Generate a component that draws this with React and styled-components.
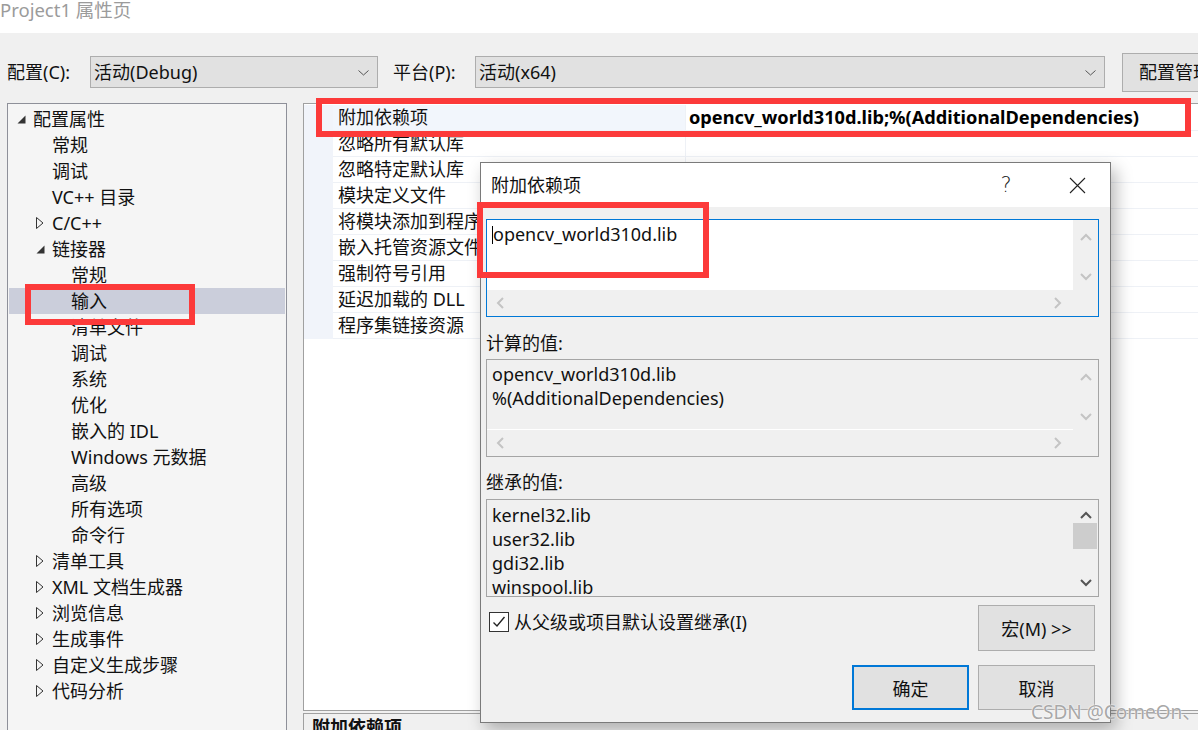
import React from 'react'
import styled, { createGlobalStyle } from 'styled-components'

const GlobalStyle = createGlobalStyle`
  html, body { margin: 0; padding: 0; }
  body {
    font-family: "Noto Sans", "Noto Sans CJK SC", sans-serif;
    font-size: 18px;
    color: #111;
    background: #f0f0f0;
  }
  * { box-sizing: border-box; }
`

const treeItems = [
  { label: '配置属性', level: 0, arrow: 'open' },
  { label: '常规', level: 1 },
  { label: '调试', level: 1 },
  { label: 'VC++ 目录', level: 1 },
  { label: 'C/C++', level: 1, arrow: 'closed' },
  { label: '链接器', level: 1, arrow: 'open' },
  { label: '常规', level: 2 },
  { label: '输入', level: 2, selected: true },
  { label: '清单文件', level: 2 },
  { label: '调试', level: 2 },
  { label: '系统', level: 2 },
  { label: '优化', level: 2 },
  { label: '嵌入的 IDL', level: 2 },
  { label: 'Windows 元数据', level: 2 },
  { label: '高级', level: 2 },
  { label: '所有选项', level: 2 },
  { label: '命令行', level: 2 },
  { label: '清单工具', level: 1, arrow: 'closed' },
  { label: 'XML 文档生成器', level: 1, arrow: 'closed' },
  { label: '浏览信息', level: 1, arrow: 'closed' },
  { label: '生成事件', level: 1, arrow: 'closed' },
  { label: '自定义生成步骤', level: 1, arrow: 'closed' },
  { label: '代码分析', level: 1, arrow: 'closed' },
]

const props = [
  { name: '附加依赖项', value: 'opencv_world310d.lib;%(AdditionalDependencies)', active: true },
  { name: '忽略所有默认库' },
  { name: '忽略特定默认库' },
  { name: '模块定义文件' },
  { name: '将模块添加到程序集' },
  { name: '嵌入托管资源文件' },
  { name: '强制符号引用' },
  { name: '延迟加载的 DLL' },
  { name: '程序集链接资源' },
]

const inherited = ['kernel32.lib', 'user32.lib', 'gdi32.lib', 'winspool.lib']

export default function App() {
  return (
    <>
      <GlobalStyle />
      <Page>
        <TitleBar>Project1 属性页</TitleBar>

        <ConfigBar>
          <FieldLabel $width={83}>配置(C):</FieldLabel>
          <Select $width={288}>
            活动(Debug)
            <SelectCaret />
          </Select>
          <FieldLabel $width={82} $gap={15}>平台(P):</FieldLabel>
          <Select $width={630}>
            活动(x64)
            <SelectCaret />
          </Select>
          <ManagerButton>配置管理器(O)...</ManagerButton>
        </ConfigBar>

        <Body>
          <Tree>
            {treeItems.map((item, i) => (
              <TreeRow key={i} $level={item.level} $selected={item.selected}>
                <ArrowSlot>
                  {item.arrow === 'open' && (
                    <svg width="9" height="9" viewBox="0 0 9 9">
                      <polygon points="8.5,0.5 8.5,8.5 0.5,8.5" fill="#333" />
                    </svg>
                  )}
                  {item.arrow === 'closed' && (
                    <svg width="8" height="12" viewBox="0 0 8 12">
                      <polygon points="0.5,0.5 7,6 0.5,11.5" fill="none" stroke="#333" strokeWidth="1" />
                    </svg>
                  )}
                </ArrowSlot>
                {item.label}
              </TreeRow>
            ))}
          </Tree>

          <RightPane>
            <Grid>
              {props.map((p, i) => (
                <PropRow key={i}>
                  <Gutter />
                  <PropName $active={p.active}>{p.name}</PropName>
                  <PropValue $bold={p.active}>{p.value}</PropValue>
                </PropRow>
              ))}
            </Grid>
            <Description>附加依赖项</Description>
          </RightPane>
        </Body>

        <Dialog>
          <DialogHeader>
            <DialogTitle>附加依赖项</DialogTitle>
            <HelpGlyph>?</HelpGlyph>
            <CloseBox>
              <svg width="17" height="17" viewBox="0 0 17 17">
                <path d="M1 1 L16 16 M16 1 L1 16" stroke="#222" strokeWidth="1.1" />
              </svg>
            </CloseBox>
          </DialogHeader>

          <DialogBody>
            <ScrollBox $focused>
              <BoxText>
                <Caret />opencv_world310d.lib
              </BoxText>
              <VScroll>
                <Chevron dir="up" />
                <Chevron dir="down" />
              </VScroll>
              <HScroll>
                <Chevron dir="left" />
                <Chevron dir="right" />
              </HScroll>
              <Corner />
            </ScrollBox>

            <SectionLabel>计算的值:</SectionLabel>
            <ScrollBox>
              <BoxText $disabled>
                <div>opencv_world310d.lib</div>
                <div>%(AdditionalDependencies)</div>
              </BoxText>
              <VScroll>
                <Chevron dir="up" />
                <Chevron dir="down" />
              </VScroll>
              <HScroll>
                <Chevron dir="left" />
                <Chevron dir="right" />
              </HScroll>
              <Corner />
            </ScrollBox>

            <SectionLabel $top={13} $bottom={5}>继承的值:</SectionLabel>
            <ListBox>
              <ListText>
                {inherited.map((l) => (
                  <div key={l}>{l}</div>
                ))}
              </ListText>
              <ListScroll>
                <Chevron dir="up" color="#555" />
                <Thumb />
                <Chevron dir="down" color="#555" />
              </ListScroll>
            </ListBox>

            <CheckRow>
              <CheckLabel>
                <CheckBox>
                  <svg width="16" height="16" viewBox="0 0 16 16">
                    <path d="M2.5 8.5 L6 12 L13.5 3" fill="none" stroke="#222" strokeWidth="1.4" />
                  </svg>
                </CheckBox>
                <span>从父级或项目默认设置继承(I)</span>
              </CheckLabel>
              <DlgButton $tall>宏(M) &gt;&gt;</DlgButton>
            </CheckRow>

            <ButtonRow>
              <DlgButton $default>确定</DlgButton>
              <DlgButton>取消</DlgButton>
            </ButtonRow>
          </DialogBody>
        </Dialog>

        <Highlight $left={316} $top={98} $width={875} $height={39} />
        <Highlight $left={477} $top={202} $width={232} $height={76} />
        <Highlight $left={25} $top={284} $width={170} $height={41} />

        <Watermark>CSDN @ComeOn、</Watermark>
      </Page>
    </>
  )
}

function SelectCaret() {
  return (
    <CaretIcon width="11" height="6" viewBox="0 0 11 6">
      <path d="M0.5 0.5 L5.5 5 L10.5 0.5" fill="none" stroke="#555" strokeWidth="1" />
    </CaretIcon>
  )
}

function Chevron({ dir, color = '#c4c4c4' }) {
  const paths = {
    up: 'M1 7 L6 2 L11 7',
    down: 'M1 2 L6 7 L11 2',
    left: 'M7 1 L2 6 L7 11',
    right: 'M2 1 L7 6 L2 11',
  }
  const vertical = dir === 'up' || dir === 'down'
  return (
    <svg
      width={vertical ? 12 : 9}
      height={vertical ? 9 : 12}
      viewBox={vertical ? '0 0 12 9' : '0 0 9 12'}
    >
      <path d={paths[dir]} fill="none" stroke={color} strokeWidth="2" />
    </svg>
  )
}

const Page = styled.div`
  position: relative;
  width: 1198px;
  height: 730px;
  overflow: hidden;
  background: #f0f0f0;
  display: flex;
  flex-direction: column;
`

const TitleBar = styled.div`
  height: 33px;
  flex-shrink: 0;
  background: #fff;
  color: #9b9b9b;
  font-size: 18.5px;
  line-height: 20px;
  white-space: nowrap;
`

const ConfigBar = styled.div`
  height: 69px;
  flex-shrink: 0;
  display: flex;
  align-items: flex-start;
  padding: 20px 0 0 7px;
  white-space: nowrap;
`

const FieldLabel = styled.div`
  width: ${(p) => p.$width}px;
  margin-left: ${(p) => p.$gap || 0}px;
  margin-top: 3px;
  line-height: 32px;
  color: #111;
  flex-shrink: 0;
`

const Select = styled.div`
  position: relative;
  width: ${(p) => p.$width}px;
  height: 32px;
  margin-top: 3px;
  flex-shrink: 0;
  background: #e1e1e1;
  border: 1px solid #adadad;
  padding-left: 3px;
  line-height: 31px;
  display: flex;
  align-items: center;
  justify-content: space-between;
  padding-right: 8px;
`

const CaretIcon = styled.svg`
  margin-top: 2px;
`

const ManagerButton = styled.div`
  margin-left: 17px;
  flex-shrink: 0;
  height: 39px;
  padding: 0 16px;
  line-height: 37px;
  background: #e1e1e1;
  border: 1px solid #adadad;
`

const Body = styled.div`
  flex: 1;
  min-height: 0;
  display: flex;
  gap: 16px;
  padding: 1px 0 0 7px;
`

const Tree = styled.div`
  width: 280px;
  flex-shrink: 0;
  margin-bottom: -20px;
  background: #f5f5f5;
  border: 1px solid #8e9099;
  padding-top: 2px;
`

const TreeRow = styled.div`
  height: 26px;
  line-height: 26px;
  display: flex;
  align-items: center;
  margin: 0 1px;
  padding-left: ${(p) => 7 + p.$level * 19}px;
  background: ${(p) => (p.$selected ? '#cbcedb' : 'transparent')};
  white-space: nowrap;
  color: #111;
`

const ArrowSlot = styled.span`
  width: 17px;
  flex-shrink: 0;
  display: flex;
  align-items: center;
  padding-left: 1px;
`

const RightPane = styled.div`
  flex: 1;
  display: flex;
  flex-direction: column;
  margin-right: -20px;
  min-width: 0;
`

const Grid = styled.div`
  height: 608px;
  flex-shrink: 0;
  background: #fff;
  border: 1px solid #a0a0a0;
  padding-top: 1px;
  overflow: hidden;
`

const PropRow = styled.div`
  display: grid;
  grid-template-columns: 29px 352px 1fr;
  height: 26px;
  white-space: nowrap;
`

const Gutter = styled.div`
  background: #f1f4fa;
`

const PropName = styled.div`
  padding-left: 5px;
  line-height: 25px;
  border-bottom: 1px solid #eef1f6;
  background: ${(p) => (p.$active ? '#f2f6fc' : '#fff')};
  overflow: hidden;
`

const PropValue = styled.div`
  padding-left: 3px;
  line-height: 25px;
  border-bottom: 1px solid #eef1f6;
  border-left: 1px solid #eef1f6;
  font-weight: ${(p) => (p.$bold ? 700 : 400)};
  font-size: ${(p) => (p.$bold ? 18.2 : 18)}px;
  color: #000;
  overflow: hidden;
`

const Description = styled.div`
  margin-top: 2px;
  flex: 1;
  border: 1px solid #a0a0a0;
  padding: 0 8px;
  line-height: 26px;
  font-weight: 700;
`

const Dialog = styled.div`
  position: absolute;
  left: 480px;
  top: 162px;
  width: 631px;
  height: 561px;
  border: 1px solid #7a7a7a;
  background: #f0f0f0;
  box-shadow: 5px 7px 16px rgba(0, 0, 0, 0.28);
  display: flex;
  flex-direction: column;
`

const DialogHeader = styled.div`
  height: 44px;
  flex-shrink: 0;
  background: #fff;
  display: flex;
  align-items: center;
  padding-left: 10px;
`

const DialogTitle = styled.div`
  flex: 1;
  line-height: 24px;
`

const HelpGlyph = styled.div`
  width: 30px;
  text-align: center;
  font-family: "DejaVu Sans", sans-serif;
  font-size: 21px;
  line-height: 24px;
  color: #222;
  margin-right: 23px;
  font-weight: 300;
`

const CloseBox = styled.div`
  width: 66px;
  height: 100%;
  display: flex;
  align-items: center;
  justify-content: center;
`

const DialogBody = styled.div`
  flex: 1;
  padding: 12px 11px 0 5px;
  display: flex;
  flex-direction: column;
`

const ScrollBox = styled.div`
  height: 98px;
  flex-shrink: 0;
  display: grid;
  grid-template-columns: 1fr 25px;
  grid-template-rows: 1fr 26px;
  border: 1px solid ${(p) => (p.$focused ? '#0078d7' : '#a5a5a5')};
  background: #f0f0f0;
`

const BoxText = styled.div`
  padding: 2px 5px 0 5px;
  line-height: 24px;
  color: #111;
  background: ${(p) => (p.$disabled ? '#f0f0f0' : '#fff')};
  border-bottom: 1px solid #fff;
  white-space: nowrap;
  overflow: hidden;
`

const Caret = styled.span`
  display: inline-block;
  width: 1px;
  height: 18px;
  background: #000;
  vertical-align: -3px;
`

const VScroll = styled.div`
  display: flex;
  flex-direction: column;
  align-items: center;
  justify-content: space-between;
  padding: 13px 0 9px;
  background: #f0f0f0;
`

const HScroll = styled.div`
  display: flex;
  align-items: center;
  justify-content: space-between;
  padding: 0 11px 0 9px;
  background: #f0f0f0;
`

const Corner = styled.div`
  background: #f0f0f0;
`

const SectionLabel = styled.div`
  margin-top: ${(p) => p.$top ?? 14}px;
  margin-bottom: ${(p) => p.$bottom ?? 4}px;
  line-height: 24px;
  color: #111;
`

const ListBox = styled.div`
  height: 98px;
  flex-shrink: 0;
  display: grid;
  grid-template-columns: 1fr 25px;
  border: 1px solid #a5a5a5;
  background: #f0f0f0;
  overflow: hidden;
`

const ListText = styled.div`
  padding: 3px 5px 0;
  line-height: 24px;
  height: 96px;
  color: #111;
  overflow: hidden;
`

const ListScroll = styled.div`
  display: flex;
  flex-direction: column;
  align-items: center;
  padding: 11px 0 9px;
  justify-content: space-between;
`

const Thumb = styled.div`
  align-self: stretch;
  height: 26px;
  margin: 0 1px 26px 0;
  background: #cdcdcd;
`

const CheckRow = styled.div`
  margin-top: 8px;
  display: flex;
  align-items: flex-start;
  justify-content: space-between;
  padding-right: 4px;
`

const CheckLabel = styled.label`
  margin-top: 6px;
  margin-left: 3px;
  display: flex;
  align-items: center;
  gap: 5px;
  line-height: 22px;
  color: #111;
`

const CheckBox = styled.span`
  width: 20px;
  height: 20px;
  flex-shrink: 0;
  border: 1px solid #333;
  background: #fff;
  display: flex;
  align-items: center;
  justify-content: center;
`

const DlgButton = styled.div`
  width: 117px;
  height: ${(p) => (p.$tall ? 46 : 45)}px;
  display: flex;
  align-items: center;
  justify-content: center;
  background: #e1e1e1;
  border: ${(p) => (p.$default ? '2px solid #0078d7' : '1px solid #adadad')};
  color: #111;
`

const ButtonRow = styled.div`
  margin-top: 14px;
  display: flex;
  justify-content: flex-end;
  gap: 9px;
  padding-right: 4px;
`

const Highlight = styled.div`
  position: absolute;
  left: ${(p) => p.$left}px;
  top: ${(p) => p.$top}px;
  width: ${(p) => p.$width}px;
  height: ${(p) => p.$height}px;
  border: 6px solid #fc3a3a;
  pointer-events: none;
`

const Watermark = styled.div`
  position: absolute;
  left: 1031px;
  top: 700px;
  font-size: 19px;
  line-height: 24px;
  white-space: nowrap;
  color: #a8a8a8;
  text-shadow: 0 0 2px #fff, 0 0 1px #fff;
`
